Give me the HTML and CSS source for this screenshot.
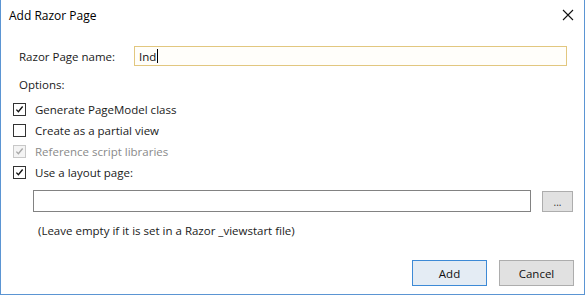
FILE: index.html
```html
<!DOCTYPE html>
<html lang="en">
<head>
    <meta charset="UTF-8">
    <title>Add Razor Page</title>
    <link rel="stylesheet" href="styles.css">
</head>
<body>
    <div class="dialog">
        <div class="titlebar">
            <span class="title">Add Razor Page</span>
            <span class="close">
                <svg width="12" height="12" viewBox="0 0 12 12"><path d="M1 1 L11 11 M11 1 L1 11" stroke="#111" stroke-width="1.1" fill="none"/></svg>
            </span>
        </div>
        <div class="content">
            <div class="name-row">
                <label class="name-label">Razor Page name:</label>
                <div class="textbox focused">Ind<span class="caret"></span></div>
            </div>
            <div class="options-label">Options:</div>
            <div class="checks">
                <label class="check">
                    <span class="box on"><svg viewBox="0 0 13 13"><path d="M2.8 6.6 L5.2 9.2 L10.2 3" stroke="#111" stroke-width="1.6" fill="none"/></svg></span>
                    <span>Generate PageModel class</span>
                </label>
                <label class="check">
                    <span class="box"></span>
                    <span>Create as a partial view</span>
                </label>
                <label class="check disabled">
                    <span class="box on"><svg viewBox="0 0 13 13"><path d="M2.8 6.6 L5.2 9.2 L10.2 3" stroke="#a8a8a8" stroke-width="1.6" fill="none"/></svg></span>
                    <span>Reference script libraries</span>
                </label>
                <label class="check">
                    <span class="box on"><svg viewBox="0 0 13 13"><path d="M2.8 6.6 L5.2 9.2 L10.2 3" stroke="#111" stroke-width="1.6" fill="none"/></svg></span>
                    <span>Use a layout page:</span>
                </label>
            </div>
            <div class="layout-row">
                <div class="textbox path"></div>
                <span class="browse">...</span>
            </div>
            <div class="hint">(Leave empty if it is set in a Razor _viewstart file)</div>
        </div>
        <div class="footer">
            <span class="btn default">Add</span>
            <span class="btn">Cancel</span>
        </div>
    </div>
</body>
</html>
```

FILE: styles.css
```css
body {
    margin: 0;
    background: #fff;
    font-family: "Open Sans", "Liberation Sans", sans-serif;
    font-size: 11.5px;
    color: #1a1a1a;
}
.dialog {
    width: 583px;
    height: 294px;
    border: 1px solid #5b95d3;
    border-top: none;
    background: #fff;
    display: flex;
    flex-direction: column;
}
.titlebar {
    height: 30px;
    display: flex;
    align-items: center;
    justify-content: space-between;
    padding: 0 10px 0 8px;
}
.title {
    font-size: 12px;
    color: #000;
}
.close {
    display: flex;
    margin-top: -1px;
}
.content {
    padding-left: 12px;
}
.name-row {
    display: flex;
    align-items: center;
    margin-top: 16px;
}
.name-label {
    width: 121px;
    padding-left: 6px;
    box-sizing: border-box;
}
.textbox {
    box-sizing: border-box;
    height: 20px;
    border: 1px solid #7a7a7a;
    background: #fff;
    display: flex;
    align-items: center;
    padding-left: 4px;
}
.textbox.focused {
    width: 433px;
    border-color: #e2c77f;
    background: #fffefa;
    color: #111;
}
.caret {
    width: 1px;
    height: 14px;
    background: #000;
    margin-left: 1px;
}
.options-label {
    margin-top: 11px;
    margin-left: 6px;
    line-height: 16px;
}
.checks {
    margin-top: 6px;
    display: flex;
    flex-direction: column;
}
.check {
    height: 21px;
    display: flex;
    align-items: center;
}
.box {
    width: 13px;
    height: 13px;
    box-sizing: border-box;
    border: 1px solid #333;
    background: #fff;
    margin-right: 9px;
    display: flex;
}
.box svg {
    width: 11px;
    height: 11px;
}
.check.disabled {
    color: #8a8a8a;
}
.check.disabled .box {
    border-color: #c8c8c8;
    background: #f4f4f4;
}
.layout-row {
    display: flex;
    margin-top: 7px;
    margin-left: 20px;
}
.textbox.path {
    width: 498px;
    height: 22px;
    border-color: #828282;
}
.browse {
    box-sizing: border-box;
    width: 31px;
    height: 21px;
    margin-left: 11px;
    margin-top: 1px;
    border: 1px solid #adadad;
    background: #e1e1e1;
    display: flex;
    justify-content: center;
    align-items: center;
    font-size: 10px;
    color: #333;
}
.hint {
    margin-top: 11px;
    margin-left: 25px;
    line-height: 16px;
}
.footer {
    display: flex;
    justify-content: flex-end;
    gap: 12px;
    margin-top: 21px;
    padding-right: 10px;
}
.btn {
    box-sizing: border-box;
    width: 75px;
    height: 26px;
    border: 1px solid #adadad;
    background: #e1e1e1;
    display: flex;
    align-items: center;
    justify-content: center;
    color: #111;
}
.btn.default {
    border-color: #3d8ad6;
    background: #e4ecf4;
}
```
